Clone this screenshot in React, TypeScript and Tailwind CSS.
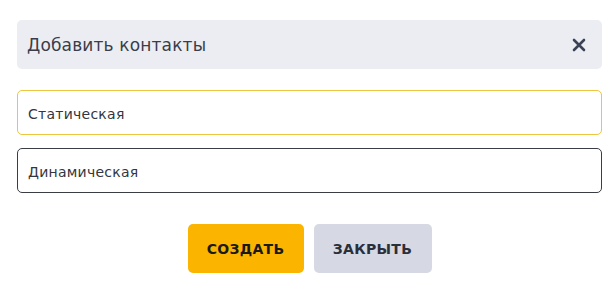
import React from "react";

export default function App() {
  const font = { fontFamily: "'DejaVu Sans', 'Noto Sans', sans-serif" };
  return (
    <div className="w-[616px] h-[297px] bg-white pl-[17px] pr-[14px] pt-[20px]" style={font}>
      <div className="flex h-[49px] items-center justify-between rounded-[5px] bg-[#ecedf3] pl-[10px] pr-[16px]">
        <span className="pt-[2px] text-[17px] tracking-[0.15px] text-[#3a3d4a]">Добавить контакты</span>
        <svg width="14" height="14" viewBox="0 0 14 14" className="text-[#3b4256]">
          <path d="M2 2 L12 12 M12 2 L2 12" stroke="currentColor" strokeWidth="2.6" strokeLinecap="round" />
        </svg>
      </div>
      <div className="mt-[21px] flex flex-col gap-[13px]">
        <div className="flex h-[45px] items-center rounded-[5px] border border-[#ecc640] pl-[10px] pt-[3px] text-[14px] tracking-[0.25px] text-[#333640]">
          Статическая
        </div>
        <div className="flex h-[45px] items-center rounded-[5px] border border-[#3a3d45] pl-[10px] pt-[3px] text-[14px] tracking-[0.25px] text-[#333640]">
          Динамическая
        </div>
      </div>
      <div className="mt-[31px] flex justify-center gap-[10px]">
        <button className="h-[49px] w-[116px] rounded-[5px] bg-[#fbb500] pt-[1px] text-[14px] font-bold tracking-[0.3px] text-[#1a1a1a]">
          СОЗДАТЬ
        </button>
        <button className="h-[49px] w-[118px] rounded-[5px] bg-[#d6d9e3] pt-[1px] text-[14px] font-bold tracking-[0.3px] text-[#2b2f3a]">
          ЗАКРЫТЬ
        </button>
      </div>
    </div>
  );
}
